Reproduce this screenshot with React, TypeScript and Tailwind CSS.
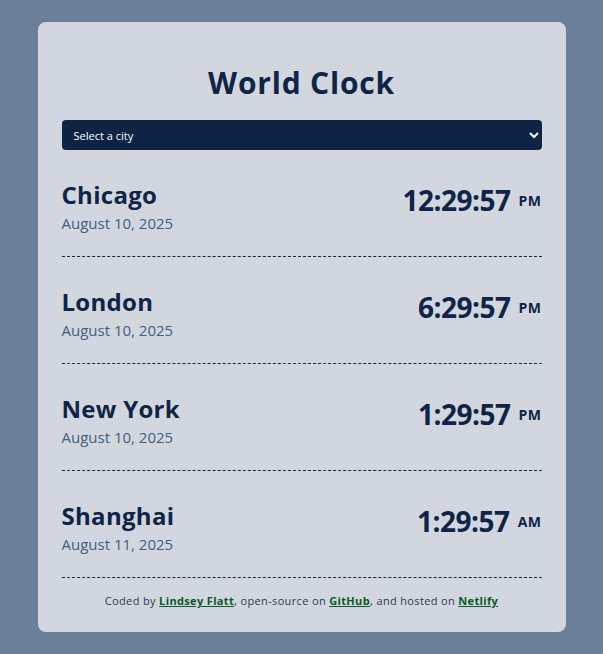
const cities = [
  { name: "Chicago", date: "August 10, 2025", time: "12:29:57", ampm: "PM" },
  { name: "London", date: "August 10, 2025", time: "6:29:57", ampm: "PM" },
  { name: "New York", date: "August 10, 2025", time: "1:29:57", ampm: "PM" },
  { name: "Shanghai", date: "August 11, 2025", time: "1:29:57", ampm: "AM" },
];

export default function App() {
  return (
    <div className="min-h-screen bg-[#6b7f99] pt-[22px] pb-6 font-['Open_Sans',sans-serif] text-[#0f2446]">
      <div className="mx-auto w-[528px] rounded-lg bg-[#d2d7df] px-6 pt-[43px] pb-[22px]">
        <h1 className="text-center text-[30px] font-bold leading-[36px] tracking-[0.8px]">World Clock</h1>
        <select className="mt-[19px] h-[30px] w-full rounded-[4px] bg-[#0f2444] px-[8px] text-[11px] text-white outline-none">
          <option>Select a city</option>
        </select>

        <div>
          {cities.map((c) => (
            <div key={c.name} className="flex items-start justify-between border-b border-dashed border-[#0f2446] pt-[30px] pb-[23px]">
              <div>
                <div className="text-[24px] font-bold leading-[30px] tracking-[0.3px]">{c.name}</div>
                <div className="mt-[3px] text-[15px] leading-[20px] text-[#41607f]">{c.date}</div>
              </div>
              <div className="flex items-center gap-[8px] pt-[4px]">
                <span className="text-[28px] font-bold leading-[32px] tracking-[-0.5px]">{c.time}</span>
                <span className="text-[14px] font-bold tracking-[0.5px]">{c.ampm}</span>
              </div>
            </div>
          ))}
        </div>

        <p className="mt-[15px] text-center text-[11px] tracking-[0.35px] text-[#2a3a55]">
          Coded by{" "}
          <a href="#" className="font-bold text-[#0b5a2a] underline">Lindsey Flatt</a>, open-source on{" "}
          <a href="#" className="font-bold text-[#0b5a2a] underline">GitHub</a>, and hosted on{" "}
          <a href="#" className="font-bold text-[#0b5a2a] underline">Netlify</a>
        </p>
      </div>
    </div>
  );
}
